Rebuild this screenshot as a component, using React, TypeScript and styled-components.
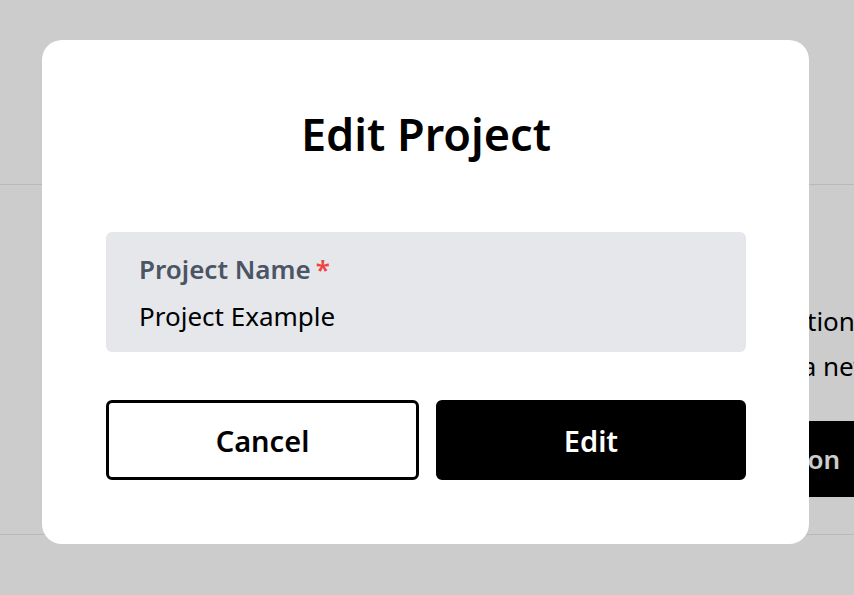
import styled, { createGlobalStyle } from "styled-components"

const GlobalStyle = createGlobalStyle`
  html, body {
    margin: 0;
    padding: 0;
    overflow: hidden;
  }
  body {
    font-family: "Noto Sans", "Open Sans", sans-serif;
    color: #000;
  }
`

export default function App() {
  return (
    <>
      <GlobalStyle />
      <Page>
        <PageHeader />
        <PageSection>
          <span />
          <SectionBody>
            <Copy>Description</Copy>
            <Copy>Create a new project</Copy>
            <PageButton>Section</PageButton>
          </SectionBody>
        </PageSection>
      </Page>

      <Overlay>
        <Modal>
          <Title>Edit Project</Title>

          <Field>
            <Label>
              Project Name<Required>*</Required>
            </Label>
            <Value>Project Example</Value>
          </Field>

          <Actions>
            <Button variant="outline">Cancel</Button>
            <Button variant="solid">Edit</Button>
          </Actions>
        </Modal>
      </Overlay>
    </>
  )
}

const Page = styled.div`
  background: #fff;
  height: 100vh;
  overflow: hidden;
`

const PageHeader = styled.div`
  border-bottom: 1px solid #e7e7ee;
  height: 184px;
`

const PageSection = styled.div`
  border-bottom: 1px solid #e7e7ee;
  display: grid;
  grid-template-columns: 715px 1fr;
  height: 349px;
`

const SectionBody = styled.div`
  display: flex;
  flex-direction: column;
  padding-top: 114px;
  white-space: nowrap;
`

const Copy = styled.p`
  font-size: 26px;
  line-height: 45px;
  margin: 0;
`

const PageButton = styled.div`
  align-items: center;
  background: #000;
  border-radius: 6px;
  color: #fff;
  display: flex;
  font-size: 26px;
  font-weight: 600;
  height: 76px;
  margin-top: 32px;
  padding: 0 40px 0 32px;
  width: max-content;
`

const Overlay = styled.div`
  align-items: center;
  background: rgba(0, 0, 0, 0.2);
  display: flex;
  inset: 0;
  justify-content: center;
  position: fixed;
`

const Modal = styled.div`
  background: #fff;
  border-radius: 20px;
  box-sizing: border-box;
  display: flex;
  flex-direction: column;
  margin: 0 0 11px -3px;
  padding: 64px 63px 64px 64px;
  width: 767px;
`

const Title = styled.h2`
  font-size: 45px;
  font-weight: 600;
  line-height: 60px;
  margin: 0 0 68px;
  text-align: center;
`

const Field = styled.div`
  background: #e5e7eb;
  border-radius: 6px;
  display: flex;
  flex-direction: column;
  gap: 20px;
  padding: 24px 32px 22px 33px;
`

const Label = styled.div`
  color: #4b5563;
  font-size: 26px;
  font-weight: 600;
  line-height: 26px;
`

const Required = styled.span`
  color: #ef4444;
  margin-left: 5px;
`

const Value = styled.div`
  font-size: 26px;
  line-height: 28px;
`

const Actions = styled.div`
  display: grid;
  gap: 17px;
  grid-template-columns: 313px 1fr;
  margin-top: 48px;
`

const Button = styled.button<{ variant: "outline" | "solid" }>`
  background: ${({ variant }) => (variant === "solid" ? "#000" : "#fff")};
  border: 3px solid #000;
  border-radius: 6px;
  color: ${({ variant }) => (variant === "solid" ? "#fff" : "#000")};
  cursor: pointer;
  font-family: inherit;
  font-size: 29px;
  font-weight: 600;
  height: 80px;
`
